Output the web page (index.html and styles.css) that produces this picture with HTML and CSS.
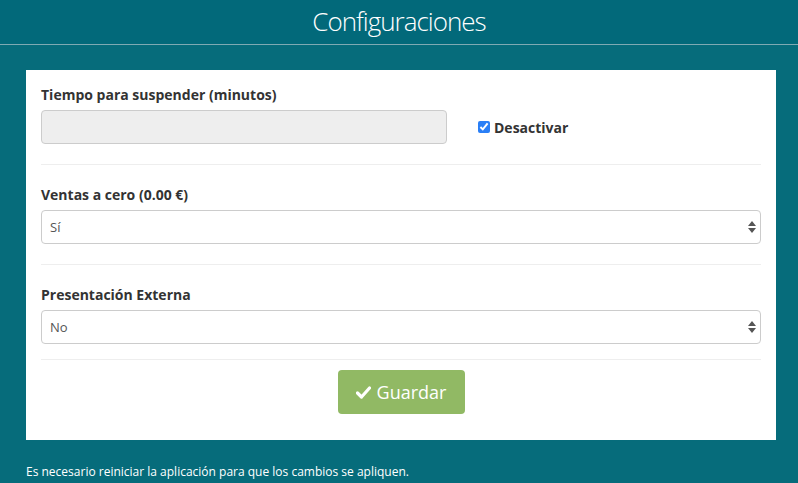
FILE: index.html
```html
<!DOCTYPE html>
<html lang="es">
<head>
  <meta charset="UTF-8" />
  <title>Configuraciones</title>
  <link rel="stylesheet" href="styles.css">
</head>
<body>

  <header class="top-bar">
    <h1>Configuraciones</h1>
  </header>

  <main class="content">
    <form class="settings-card">

      <div class="field-row">
        <div class="field field-grow">
          <label for="suspendTime">Tiempo para suspender (minutos)</label>
          <input type="text" id="suspendTime" class="form-control" disabled>
        </div>
        <label class="check-label">
          <input type="checkbox" checked> Desactivar
        </label>
      </div>

      <hr class="divider">

      <div class="field">
        <label for="zeroSales">Ventas a cero (0.00 €)</label>
        <div class="select-wrap">
          <select id="zeroSales" class="form-control">
            <option>Sí</option>
            <option>No</option>
          </select>
          <svg class="select-arrows" width="8" height="12" viewBox="0 0 8 12"><path d="M4 0 L8 5 H0 Z M4 12 L8 7 H0 Z" fill="#555"/></svg>
        </div>
      </div>

      <hr class="divider">

      <div class="field">
        <label for="extPresentation">Presentación Externa</label>
        <div class="select-wrap">
          <select id="extPresentation" class="form-control">
            <option>No</option>
            <option>Sí</option>
          </select>
          <svg class="select-arrows" width="8" height="12" viewBox="0 0 8 12"><path d="M4 0 L8 5 H0 Z M4 12 L8 7 H0 Z" fill="#555"/></svg>
        </div>
      </div>

      <hr class="divider divider-last">

      <div class="actions">
        <button type="button" class="btn-save">
          <svg width="15" height="13" viewBox="0 0 15 13"><path d="M1.5 7 L5.5 11 L13.5 2" fill="none" stroke="#fff" stroke-width="3.2" stroke-linecap="round" stroke-linejoin="round"/></svg>
          Guardar
        </button>
      </div>
    </form>

    <p class="notice">Es necesario reiniciar la aplicación para que los cambios se apliquen.</p>
  </main>

</body>
</html>
```

FILE: styles.css
```css
body {
  margin: 0;
  font-family: "Open Sans", "Noto Sans", sans-serif;
  background-color: #066c7b;
  color: #333;
  height: 483px;
  overflow: hidden;
}

.top-bar {
  background-color: #02697a;
  border-bottom: 1px solid #7faab3;
  height: 44px;
  text-align: center;
}

.top-bar h1 {
  margin: 0;
  font-size: 26px;
  font-weight: 300;
  letter-spacing: -1px;
  line-height: 42px;
  color: #fff;
}

.content {
  padding: 25px 22px 0 26px;
}

.settings-card {
  background: #fff;
  padding: 15px 15px 26px;
}

.field label {
  display: block;
  font-size: 14px;
  font-weight: 700;
  line-height: 20px;
  margin-bottom: 5px;
}

.field-row {
  display: flex;
  align-items: flex-end;
}

.field-grow {
  width: 406px;
}

.form-control {
  box-sizing: border-box;
  display: block;
  width: 100%;
  height: 34px;
  padding: 6px 8px;
  font-family: inherit;
  font-size: 13px;
  color: #555;
  background-color: #fff;
  border: 1px solid #ccc;
  border-radius: 4px;
  appearance: none;
  -webkit-appearance: none;
}

.form-control:disabled {
  background-color: #eee;
}

.check-label {
  display: flex;
  align-items: center;
  gap: 4px;
  height: 34px;
  margin-left: 31px;
  font-size: 14px;
  font-weight: 700;
}

.check-label input {
  width: 12px;
  height: 12px;
  margin: 0;
  accent-color: #2a7ff6;
}

.select-wrap {
  position: relative;
}

.select-arrows {
  position: absolute;
  right: 5px;
  top: 11px;
  pointer-events: none;
}

.divider {
  border: 0;
  border-top: 1px solid #eee;
  margin: 20px 0;
}

.divider-last {
  margin: 15px 0 10px;
}

.actions {
  display: flex;
  justify-content: center;
}

.btn-save {
  display: flex;
  align-items: center;
  gap: 6px;
  width: 127px;
  height: 44px;
  justify-content: center;
  background-color: #91b964;
  border: none;
  border-radius: 4px;
  color: #fff;
  font-family: inherit;
  font-size: 18px;
  cursor: pointer;
}

.notice {
  margin: 23px 0 0;
  font-size: 12px;
  color: #fff;
}
```
